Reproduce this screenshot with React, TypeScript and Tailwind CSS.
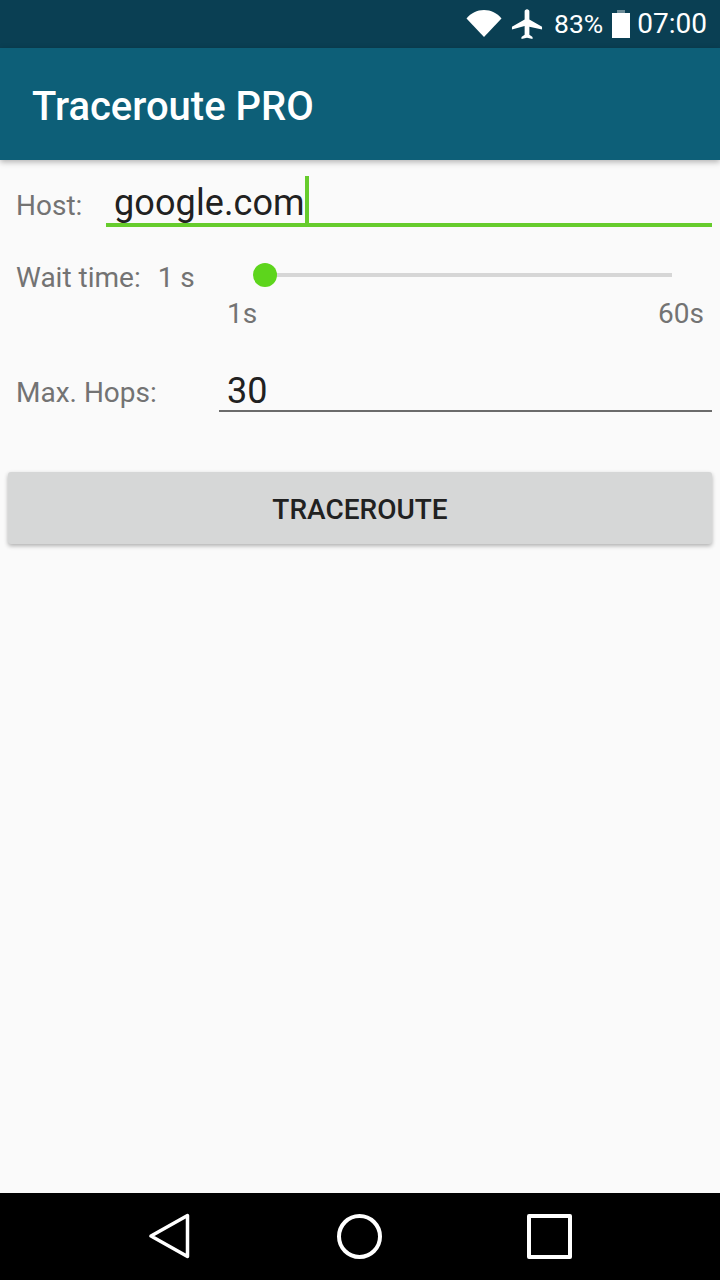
import React from 'react';

const WifiIcon = () => (
    <svg width="36" height="28" viewBox="0 0 36 28" className="block -translate-y-[1px]">
        <path d="M0.5 9.5C5 4 11 1 18 1s13 3 17.5 8.5L18 28z" fill="#fff" />
    </svg>
);

const PlaneIcon = () => (
    <svg width="38" height="35" viewBox="0 0 24 24" preserveAspectRatio="none" className="block">
        <path d="M21.5 15.5v-2l-8-5V3c0-.83-.67-1.5-1.5-1.5s-1.5.67-1.5 1.5v5.5l-8 5v2l8-2.5V19l-2 1.5V22l3.5-1 3.5 1v-1.5l-2-1.5v-5.5z" fill="#fff" />
    </svg>
);

const BatteryIcon = () => (
    <div className="flex flex-col items-center w-[18px]">
        <div className="w-[8px] h-[3px] bg-white/40" />
        <div className="w-[18px] h-[25px] bg-white" />
    </div>
);

const BackIcon = () => (
    <svg width="42" height="46" viewBox="0 0 42 46" className="block">
        <path d="M38.5 2.5v41L2 23z" fill="none" stroke="#fff" strokeWidth="3.5" strokeLinejoin="round" />
    </svg>
);

const App: React.FC = () => {
    return (
        <div className="w-[720px] h-[1280px] flex flex-col bg-[#fafafa] overflow-hidden font-['Roboto',sans-serif]">
            <div className="h-12 shrink-0 bg-[#0a3f53] flex items-center justify-end pr-[13px] text-white">
                <WifiIcon />
                <div className="ml-[6px]"><PlaneIcon /></div>
                <span className="ml-[8px] text-[26.5px] leading-none">83%</span>
                <div className="ml-[9px]"><BatteryIcon /></div>
                <span className="ml-[7px] text-[28px] leading-none">07:00</span>
            </div>

            <div className="h-[112px] shrink-0 bg-[#0d5f78] flex items-center pl-8 pt-[6px] shadow-[0_2px_6px_rgba(0,0,0,0.3)] relative z-10">
                <h1 className="text-[40px] font-medium text-white leading-none">Traceroute PRO</h1>
            </div>

            <div className="flex-1 flex flex-col">
                <div className="h-[68px] flex pl-4 pr-2 pt-4">
                    <span className="w-[90px] pt-[14px] text-[28px] leading-[32px] text-[#737373]">Host:</span>
                    <div className="flex-1 h-[51px] border-b-[4px] border-[#66cc2c] pl-2 flex">
                        <span className="text-[36px] leading-[54px] text-[#212121] tracking-[0.1px]">google.com</span>
                        <div className="w-[4px] h-[47px] bg-[#66cc2c]" />
                    </div>
                </div>

                <div className="flex pl-4 pr-2 pt-[34px] h-[132px]">
                    <div className="w-[211px] flex text-[28px] leading-[32px] text-[#737373]">
                        <span>Wait time:</span>
                        <span className="ml-[17px]">1 s</span>
                    </div>
                    <div className="flex-1 flex flex-col mt-[1px] pr-2">
                        <div className="h-[24px] flex items-center relative pl-[38px] pr-[32px]">
                            <div className="w-6 h-6 rounded-full bg-[#5dd51c] absolute left-[26px]" />
                            <div className="flex-1 h-1 bg-[#d6d6d6]" />
                        </div>
                        <div className="flex justify-between text-[28px] leading-[32px] text-[#737373] pt-[11px]">
                            <span>1s</span>
                            <span>60s</span>
                        </div>
                    </div>
                </div>

                <div className="flex pl-4 pr-2 pt-[4px]">
                    <span className="w-[203px] pt-[13px] text-[28px] leading-[32px] text-[#737373]">Max. Hops:</span>
                    <div className="flex-1 h-[48px] border-b-2 border-[#6b6b6b] pl-2">
                        <span className="block text-[36px] leading-[54px] text-[#212121]">30</span>
                    </div>
                </div>

                <div className="px-2 pt-[60px]">
                    <button className="w-full h-[72px] pt-[4px] bg-[#d6d7d7] rounded-[3px] shadow-[0_2px_4px_rgba(0,0,0,0.3)] text-[28px] font-medium text-[#212121]">
                        TRACEROUTE
                    </button>
                </div>
            </div>

            <div className="h-[87px] shrink-0 bg-black relative">
                <div className="absolute left-[149px] top-[20px]"><BackIcon /></div>
                <div className="absolute left-[337px] top-[21px] w-[45px] h-[45px] rounded-full border-[4px] border-white" />
                <div className="absolute left-[527px] top-[21px] w-[45px] h-[45px] rounded-[2px] border-[4px] border-white" />
            </div>
        </div>
    );
};

export default App;
